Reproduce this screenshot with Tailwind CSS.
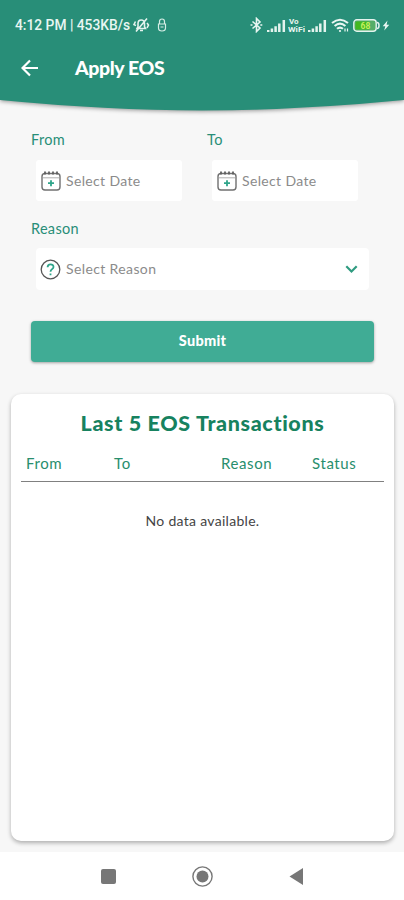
<!DOCTYPE html>
<html lang="en">
<head>
<meta charset="utf-8">
<title>Apply EOS</title>
<script src="https://cdn.jsdelivr.net/npm/@tailwindcss/browser@4"></script>
</head>
<body class="bg-[#f7f7f7]">
<svg class="hidden">
  <symbol id="calendar" viewBox="0 0 20 20">
    <rect x="1" y="2.5" width="18" height="16.5" rx="3" fill="none" stroke="#707070" stroke-width="1.4"/>
    <path d="M1.5 6.8h17" stroke="#9a9a9a" stroke-width=".8"/>
    <path d="M4 .6v3M8 .6v3M12 .6v3M16 .6v3" stroke="#606060" stroke-width="1.8"/>
    <path d="M10 9.2v6M7 12.2h6" stroke="#2fa58a" stroke-width="1.8"/>
  </symbol>
  <symbol id="signal" viewBox="0 0 19 13">
    <path d="M1.2 13v-2M4.9 13v-3.6M8.6 13V7.2M12.3 13V4.4M16.8 13V1" stroke="#e4f3ee" stroke-width="2.500"/>
  </symbol>
</svg>
<div class="flex h-[900px] w-[404px] flex-col overflow-hidden font-['Lato',sans-serif]">
  <header class="relative h-[120px] shrink-0">
    <svg class="absolute inset-0 drop-shadow-[0_1px_2px_rgba(0,0,0,0.4)]" width="404" height="120" viewBox="0 0 404 120"><path d="M-6 -6H410V99.5Q300 110.5 202 110.5T-6 99.5Z" fill="#288e78"/></svg>
    <div class="relative flex h-[50px] items-center pl-[15px] text-[#e9f6f2]">
      <span class="w-[117px] whitespace-nowrap font-['Roboto',sans-serif] text-[13.8px] font-medium tracking-[0px]">4:12 PM | 453KB/s</span>
      <svg class="ml-[1px]" width="17" height="16" viewBox="0 0 17 16" fill="none" stroke="#e4f3ee" stroke-width="1.6"><path d="M4 11.5h8.5l-1-2V6.5C11.5 4 10 3 8.3 3S5 4 5 6.500v3zM7 13.500h3M3 14.500 14 1.500M2.500 4.500 1 7.500l2 1M14 6l1.500 2-1.500 3"/></svg>
      <svg class="ml-[7px]" width="10" height="14" viewBox="0 0 10 14" fill="none" stroke="#d5ede5" stroke-width="1.200"><path d="M2.500 6V3.500Q2.500 1 5 1T7.500 3.500V6M1.500 6h7v4Q8.500 13 5 13T1.500 10ZM3.500 9h3"/></svg>
      <svg class="ml-[83px]" width="13" height="16" viewBox="0 0 13 16" fill="none" stroke="#e9f6f2" stroke-width="1.600"><path d="M2.500 4.500 10 11l-3.500 3.500v-13L10 5l-7.500 6.500M.5 8h2M10.300 8h2"/></svg>
      <svg class="ml-[4px]" width="19" height="13"><use href="#signal"/></svg>
      <svg class="ml-[2px]" width="18" height="16" viewBox="0 0 18 16" font-family="Roboto" font-weight="700" fill="#e9f6f2"><text x="1" y="7" font-size="8">Vo</text><text x="0" y="14.800" font-size="8" textLength="17" lengthAdjust="spacingAndGlyphs">WiFi</text></svg>
      <svg class="ml-[2px]" width="19" height="13"><use href="#signal"/></svg>
      <svg class="ml-[4px]" width="18" height="15" viewBox="0 0 18 15" fill="none" stroke="#e9f6f2" stroke-width="2.100"><path d="M1 5Q9-1.500 17 5M3.600 8Q9 3.400 14.400 8M6 10.800Q9 8.300 12 10.800"/><circle cx="9" cy="13" r="1.100" fill="#e9f6f2" stroke="none"/><path d="M14 10.500v3M16.500 10.500v3" stroke-width="1.200"/></svg>
      <svg class="ml-[4px]" width="27" height="13" viewBox="0 0 27 13"><rect x=".8" y=".8" width="22.400" height="11.400" rx="3" fill="#54ad68" stroke="#e4f3ee" stroke-width="1.400"/><rect x="2.500" y="2.500" width="14" height="8" rx="1.500" fill="#42b81e"/><path d="M24 3.500q2 0 2 3t-2 3" fill="none" stroke="#e4f3ee" stroke-width="1.500"/><text x="7.500" y="9.700" font-family="Roboto" font-size="8.500" font-weight="700" fill="#c4f060">68</text></svg>
      <svg class="ml-[2px]" width="8" height="11" viewBox="0 0 8 11"><path d="M5.500.5.700 6.300h2.600L2.200 10.500 7.300 4.700H4.600Z" fill="#e9f6f2"/></svg>
    </div>
    <div class="relative flex h-9 items-center pl-[21px]">
      <svg width="18" height="18" viewBox="0 0 18 18" fill="none" stroke="#fff" stroke-width="2.200"><path d="M17 9H2M9 1.500 1.500 9 9 16.500"/></svg>
      <h1 class="ml-[36px] text-[19.500px] font-black leading-6 tracking-[-0.400px] text-white">Apply EOS</h1>
    </div>
  </header>
  <main class="flex flex-1 flex-col">
    <form class="flex flex-col px-[31px] pt-[10px]">
      <div class="flex">
        <div class="w-[176px]">
          <label class="block h-5 text-[14.500px] leading-5 tracking-[0.3px] text-[#288e78]">From</label>
          <div class="ml-[5px] mt-[10px] flex h-[41px] w-[146px] items-center rounded-[3px] bg-white pl-[5px]"><svg width="20" height="20"><use href="#calendar"/></svg><span class="ml-[5px] text-[14px] tracking-[0.35px] text-[#8b8b8b]">Select Date</span></div>
        </div>
        <div>
          <label class="block h-5 text-[14.500px] leading-5 tracking-[0.4px] text-[#288e78]">To</label>
          <div class="ml-[5px] mt-[10px] flex h-[41px] w-[146px] items-center rounded-[3px] bg-white pl-[5px]"><svg width="20" height="20"><use href="#calendar"/></svg><span class="ml-[5px] text-[14px] tracking-[0.35px] text-[#8b8b8b]">Select Date</span></div>
        </div>
      </div>
      <label class="mt-[18px] block h-5 text-[14.500px] leading-5 tracking-[0.3px] text-[#288e78]">Reason</label>
      <div class="ml-[5px] mt-[9px] flex h-[42px] w-[333px] items-center rounded-[4px] bg-white pl-[4px] pr-[11px]">
        <svg width="21" height="21" viewBox="0 0 21 21" fill="none"><circle cx="10.500" cy="10.500" r="9.300" stroke="#565656" stroke-width="1.300"/><path d="M7.600 8.300C7.600 4.300 13.700 4.500 13.500 8c-.1 2.200-3 2.200-3 4.800M10.500 14.400v1.800" stroke="#2fa58a" stroke-width="1.800"/></svg>
        <span class="-mt-[2px] ml-[5px] flex-1 text-[14px] tracking-[0.38px] text-[#8b8b8b]">Select Reason</span>
        <svg width="13" height="9" viewBox="0 0 13 9" fill="none" stroke="#2f9b80" stroke-width="2.200"><path d="m1.300 1.300 5.200 5.200 5.200-5.200"/></svg>
      </div>
      <button type="button" class="mt-[31px] h-[41px] w-[343px] rounded-[4px] bg-[#40ac95] pb-[2px] text-[14.500px] font-black tracking-[0.25px] text-white shadow-[0_1px_3px_rgba(0,0,0,0.35)]">Submit</button>
    </form>
    <section class="ml-[11px] mt-[32px] h-[447px] w-[383px] rounded-[10px] bg-white px-[10px] shadow-[0_2px_4px_rgba(0,0,0,0.3)]">
      <h2 class="pt-[15px] text-center text-[21.500px] font-black leading-7 tracking-[0.64px] text-[#17825f]">Last 5 EOS Transactions</h2>
      <div class="mt-[9px] flex h-[36px] border-b border-[#808080] pt-[7px] text-[15px] leading-5 tracking-[0.6px] text-[#288e6d]">
        <span class="w-[93px] pl-[5px]">From</span><span class="w-[107px]">To</span><span class="w-[91px]">Reason</span><span>Status</span>
      </div>
      <p class="mt-[29px] text-center text-[14px] leading-5 tracking-[0.3px] text-[#444]">No data available.</p>
    </section>
  </main>
  <nav class="flex h-[48px] shrink-0 items-center bg-white pl-[101px]">
    <svg width="15" height="15"><rect width="15" height="15" rx="2" fill="#777"/></svg>
    <svg class="ml-[76px]" width="21" height="21" viewBox="0 0 21 21"><circle cx="10.500" cy="10.500" r="9.600" fill="none" stroke="#777" stroke-width="1.400"/><circle cx="10.500" cy="10.500" r="6" fill="#777"/></svg>
    <svg class="ml-[76px]" width="14" height="17" viewBox="0 0 14 17"><path d="M14 0v17L.5 8.500Z" fill="#777"/></svg>
  </nav>
</div>
</body>
</html>
